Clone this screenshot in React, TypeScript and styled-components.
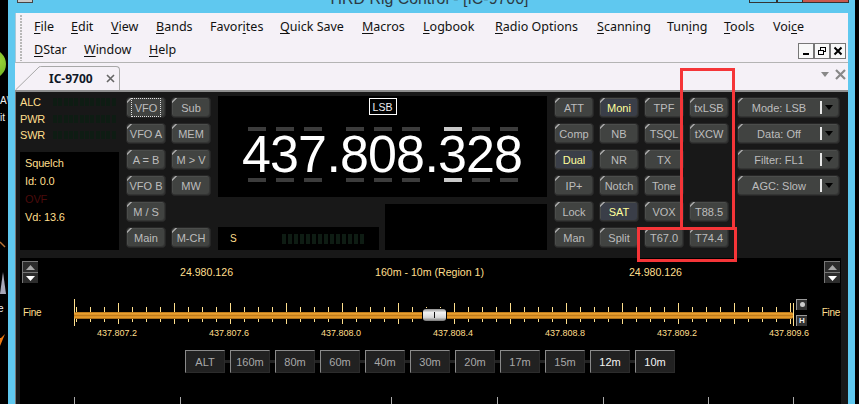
import React from "react";
import styled, { createGlobalStyle, css } from "styled-components";

const Global = createGlobalStyle`
  html, body { margin: 0; padding: 0; background: #000; }
  #root { width: 859px; height: 404px; overflow: hidden; }
`;

const sans = `"Liberation Sans", Arial, sans-serif`;
const amber = "#ffdf8c";

const Screen = styled.div`
  position: relative;
  width: 859px;
  height: 404px;
  display: flex;
  background: #000;
  overflow: hidden;
  font-family: ${sans};
`;

const Desktop = styled.div`
  position: relative;
  width: 8px;
  flex: none;
  overflow: hidden;
  background: #000;
`;
const DesktopGreen = styled.div`
  position: absolute;
  left: -24px;
  top: 49px;
  width: 30px;
  height: 30px;
  border-radius: 50%;
  background: radial-gradient(circle at 70% 40%, #9fd83a, #4f9a10);
`;
const DesktopText = styled.div<{ $top: number }>`
  position: absolute;
  left: ${(p) => (p.$top > 300 ? -7 : 0)}px;
  top: ${(p) => p.$top}px;
  color: #eee;
  font-size: 10px;
  line-height: 12px;
  white-space: nowrap;
`;
const DesktopArt = styled.svg`
  position: absolute;
  left: 0;
  top: 0;
`;

const Win = styled.div`
  width: 847px;
  flex: none;
  display: flex;
  flex-direction: column;
  background: #5fc8ef;
  padding: 0 7px;
  box-sizing: border-box;
`;

const TitleBar = styled.div`
  height: 13px;
  flex: none;
  display: grid;
  grid-template-columns: 1fr auto 1fr;
  overflow: hidden;
  margin: 0 -1px 0 0;
`;
const AppIcon = styled.div`
  width: 16px;
  height: 3px;
  margin-left: 2px;
  background: #c8c8c8;
  border: 1px solid #444;
  border-top: 0;
  box-sizing: border-box;
`;
const TitleText = styled.div`
  margin: -10px 5px 0 0;
  font-size: 15.9px;
  line-height: 18px;
  color: #2c3a44;
  white-space: nowrap;
`;
const TitleControls = styled.div`
  justify-self: end;
  display: flex;
  height: 3px;
`;
const TitleCtl = styled.div<{ $w: number; $close?: boolean }>`
  width: ${(p) => p.$w}px;
  box-sizing: border-box;
  border: 1px solid #333;
  border-top: 0;
  border-left-width: ${(p) => (p.$close ? 0 : 1)}px;
  background: ${(p) => (p.$close ? "#c8584e" : "#5fc8ef")};
`;

const MenuBar = styled.div`
  position: relative;
  height: 50px;
  flex: none;
  box-sizing: border-box;
  padding: 2px 2px 0 19px;
  background: #f5f1f7;
  border-bottom: 1px solid #b4b4b4;
  border-left: 1px solid #a8c8d8;
  display: flex;
  gap: 12px;
`;
const Grip = styled.div`
  width: 2px;
  height: 46px;
  margin: 0 0 0 -15px;
  background: repeating-linear-gradient(to bottom, #b8b8b8 0 2px, transparent 2px 3px);
`;
const MenuRows = styled.div`
  flex: 1;
  display: flex;
  flex-direction: column;
`;
const MenuRow = styled.div`
  height: 23px;
  display: flex;
  align-items: center;
`;
const MenuItem = styled.span<{ $w: number }>`
  width: ${(p) => p.$w}px;
  font-family: "Noto Sans", sans-serif;
  font-size: 12.5px;
  color: #111;
  white-space: nowrap;
  u { text-underline-offset: 2px; }
`;
const MdiControls = styled.div`
  margin-left: auto;
  display: flex;
  margin-top: 3px;
`;
const MdiBtn = styled.div`
  width: 16px;
  height: 16px;
  box-sizing: border-box;
  border: 1px solid #777;
  background: #f8f8f8;
  display: flex;
  align-items: center;
  justify-content: center;
`;

const TabStrip = styled.div`
  height: 29px;
  flex: none;
  box-sizing: border-box;
  background: #f5f1f7;
  border-bottom: 2px solid #8e8e8e;
  padding-top: 3px;
  display: flex;
  align-items: flex-end;
`;
const TabSlope = styled.svg`
  width: 27px;
  height: 24px;
  flex: none;
`;
const Tab = styled.div`
  width: 78px;
  height: 24px;
  box-sizing: border-box;
  border-top: 1px solid #a8a8a8;
  border-right: 1px solid #a8a8a8;
  border-top-right-radius: 4px;
  display: flex;
  align-items: center;
  padding-left: 7px;
  font-family: "Noto Sans", sans-serif;
  font-weight: 700;
  font-size: 12px;
  color: #101828;
`;
const TabClose = styled.svg`
  margin-left: 13px;
  flex: none;
`;
const TabTools = styled.div`
  margin: 0 2px 4px auto;
  display: flex;
  align-items: center;
  gap: 6px;
  height: 24px;
`;

const Body = styled.div`
  flex: 1;
  min-height: 0;
  display: flex;
  flex-direction: column;
  background: #181818;
  border-left: 1px solid #777;
  padding: 0 7px 0 4px;
`;
const TopPanel = styled.div`
  height: 167px;
  flex: none;
  box-sizing: border-box;
  padding-top: 5px;
  display: flex;
  align-items: flex-start;
`;
const MeterColumn = styled.div`
  width: 99px;
  flex: none;
  margin-top: -3px;
  display: flex;
  flex-direction: column;
`;
const MeterRow = styled.div`
  height: 16.5px;
  display: flex;
  align-items: center;
  color: ${amber};
  font-size: 11px;
  letter-spacing: -0.2px;
`;
const MeterName = styled.span`
  width: 33px;
`;
const Segments = styled.div<{ $gap: number }>`
  display: flex;
  gap: ${(p) => p.$gap}px;
`;
const Segment = styled.i<{ $w: number; $h: number }>`
  display: block;
  width: ${(p) => p.$w}px;
  height: ${(p) => p.$h}px;
  background: #0e1c13;
`;
const SquelchBox = styled.div`
  height: 98px;
  margin-top: 8.5px;
  box-sizing: border-box;
  padding: 2px 0 0 5px;
  background: #000;
`;
const SquelchLine = styled.div<{ $off?: boolean }>`
  height: 18px;
  line-height: 18px;
  font-size: 11px;
  letter-spacing: -0.15px;
  color: ${(p) => (p.$off ? "#4a0b0b" : amber)};
`;

const ButtonGrid = styled.div<{ $cols: number }>`
  flex: none;
  margin-left: 7px;
  display: grid;
  grid-template-columns: repeat(${(p) => p.$cols}, 40px);
  grid-auto-rows: 21px;
  gap: 5px;
`;

const buttonLook = css`
  position: relative;
  box-sizing: border-box;
  background: #414341;
  border: 1px solid #262626;
  border-radius: 4px;
  box-shadow: inset -1px -1px 0 #343534, inset 1px 1px 0 #4b4d4b;
  color: #bdbdbd;
  font-size: 11px;
  white-space: nowrap;
  display: flex;
  align-items: center;
  justify-content: center;
  &::before {
    content: "";
    position: absolute;
    left: 0;
    top: 0;
    width: 6px;
    height: 6px;
    background: linear-gradient(135deg, transparent 2px, #a8a8a8 2.5px, #a8a8a8 3.4px, transparent 4px);
  }
`;
const RigButton = styled.div<{ $on?: boolean; $focus?: boolean }>`
  ${buttonLook}
  ${(p) => p.$on && css`background: #3a3e48; color: #ffff9c;`}
  ${(p) =>
    p.$focus &&
    css`
      &::after {
        content: "";
        position: absolute;
        left: 4px;
        right: 4px;
        top: 0;
        bottom: 0;
        border: 1px dotted #e0e0e0;
      }
    `}
`;
const EmptyCell = styled.div``;

const Center = styled.div`
  width: 329px;
  flex: none;
  margin-left: 7px;
  margin-top: -1px;
  display: flex;
  flex-direction: column;
`;
const Display = styled.div`
  height: 101px;
  box-sizing: border-box;
  background: #000;
  padding-top: 2px;
  display: flex;
  flex-direction: column;
  align-items: center;
`;
const ModeBadge = styled.div`
  width: 28px;
  height: 17px;
  box-sizing: border-box;
  border: 1px solid #fff;
  color: #eee;
  font-size: 10.5px;
  display: flex;
  align-items: center;
  justify-content: center;
`;
const Frequency = styled.div`
  margin-top: 12px;
  display: flex;
`;
const DigitCell = styled.div`
  width: 28px;
  display: flex;
  flex-direction: column;
  align-items: center;
`;
const DigitMark = styled.i<{ $on?: boolean }>`
  display: block;
  width: 18px;
  height: 4px;
  background: ${(p) => (p.$on ? "#c8c8c8" : "#3c3c3c")};
`;
const DigitGlyph = styled.span`
  height: 47px;
  line-height: 46px;
  font-size: 52px;
  color: #fff;
`;
const DotGlyph = styled.span`
  width: 14px;
  height: 55px;
  line-height: 46px;
  margin-top: 4px;
  font-size: 52px;
  color: #fff;
  text-align: center;
`;
const LowerRow = styled.div`
  margin-top: 7px;
  display: flex;
  gap: 6px;
  align-items: flex-end;
`;
const SMeter = styled.div`
  width: 161px;
  height: 23px;
  background: #000;
  box-sizing: border-box;
  padding-left: 12px;
  display: flex;
  align-items: center;
  color: ${amber};
  font-size: 10px;
`;
const SName = styled.span`
  width: 52px;
`;
const InfoBox = styled.div`
  width: 162px;
  height: 46px;
  background: #000;
`;

const ModeColumn = styled.div`
  width: 103px;
  flex: none;
  margin-left: 8px;
  display: flex;
  flex-direction: column;
  gap: 5px;
`;
const ModeButton = styled.div`
  ${buttonLook}
  height: 21px;
  justify-content: flex-start;
`;
const ModeLabel = styled.span`
  width: 82px;
  text-align: center;
`;
const ModeBar = styled.i`
  display: block;
  width: 2px;
  height: 13px;
  background: #e8e8e8;
`;
const ModeArrow = styled.i`
  display: block;
  margin-left: 3px;
  width: 0;
  height: 0;
  border-left: 4.5px solid transparent;
  border-right: 4.5px solid transparent;
  border-top: 5px solid #000;
`;

const Scale = styled.div`
  flex: 1;
  min-height: 0;
  background: #000;
  display: flex;
  flex-direction: column;
  margin-top: -1px;
`;
const ScaleHead = styled.div`
  margin-top: 3px;
  padding: 0 1px 0 2px;
  display: flex;
  justify-content: space-between;
  align-items: center;
  color: ${amber};
  font-size: 10.6px;
`;
const RegionLabel = styled.span`
  margin-right: 3px;
`;
const Spinner = styled.div`
  width: 16px;
  display: flex;
  flex-direction: column;
`;
const SpinBtn = styled.div`
  height: 10px;
  background: #2c2c2c;
  border-left: 1px solid #777;
  border-top: 1px solid #777;
  box-sizing: content-box;
  display: flex;
  align-items: center;
  justify-content: center;
`;
const SliderRow = styled.div`
  margin-top: 14px;
  height: 30px;
  display: flex;
  align-items: center;
  padding: 0 1px 0 3px;
`;
const FineLabel = styled.span`
  color: ${amber};
  font-size: 10px;
  letter-spacing: -0.3px;
  width: 47px;
  flex: none;
`;
const FineEnd = styled(FineLabel)`
  width: auto;
  margin-left: auto;
`;
const Ruler = styled.svg`
  width: 725px;
  height: 30px;
  flex: none;
`;
const SideButtons = styled.div`
  margin-left: 1px;
  display: flex;
  flex-direction: column;
  gap: 5px;
`;
const SideBtn = styled.div`
  width: 11px;
  height: 11px;
  box-sizing: border-box;
  background: #333;
  border-left: 1px solid #999;
  border-top: 1px solid #999;
  color: #eee;
  font-size: 8px;
  font-weight: 700;
  display: flex;
  align-items: center;
  justify-content: center;
`;
const SideDot = styled.i`
  display: block;
  width: 5px;
  height: 5px;
  border-radius: 50%;
  background: #ccc;
`;
const TickLabels = styled.div`
  margin-top: 1px;
  padding-left: 41px;
  display: flex;
`;
const TickLabel = styled.span`
  width: 112px;
  flex: none;
  text-align: center;
  color: ${amber};
  font-size: 9px;
  line-height: 10px;
`;
const BandRow = styled.div`
  margin-top: 12px;
  padding-left: 165px;
  display: flex;
  align-items: center;
`;
const BandBtn = styled.div<{ $bright?: boolean }>`
  width: 40px;
  height: 23px;
  box-sizing: border-box;
  background: #212121;
  border-left: 1px solid #8a8a8a;
  border-top: 1px solid #8a8a8a;
  border-right: 1px solid #2c2c2c;
  border-bottom: 1px solid #2c2c2c;
  color: ${(p) => (p.$bright ? "#f4f4f4" : "#a8a8a8")};
  font-size: 11px;
  display: flex;
  align-items: center;
  justify-content: center;
`;
const BandLink = styled.i`
  display: block;
  width: 5px;
  height: 3px;
  background: #222;
`;
const BottomRuler = styled.svg`
  margin-top: auto;
  width: 820px;
  height: 7px;
  flex: none;
`;

const TallMark = styled.div`
  position: absolute;
  left: 680px;
  top: 68px;
  width: 55px;
  height: 162px;
  box-sizing: border-box;
  border: 3px solid #f53538;
  border-bottom: 0;
`;
const WideMark = styled.div`
  position: absolute;
  left: 637px;
  top: 227px;
  width: 100px;
  height: 35px;
  box-sizing: border-box;
  border: 3px solid #f53538;
`;

type Cell = { t?: string; on?: boolean; focus?: boolean };
const leftButtons: Cell[] = [
  { t: "VFO", focus: true }, { t: "Sub" },
  { t: "VFO A" }, { t: "MEM" },
  { t: "A = B" }, { t: "M > V" },
  { t: "VFO B" }, { t: "MW" },
  { t: "M / S" }, {},
  { t: "Main" }, { t: "M-CH" },
];
const rightButtons: Cell[] = [
  { t: "ATT" }, { t: "Moni", on: true }, { t: "TPF" }, { t: "txLSB" },
  { t: "Comp" }, { t: "NB" }, { t: "TSQL" }, { t: "tXCW" },
  { t: "Dual", on: true }, { t: "NR" }, { t: "TX" }, {},
  { t: "IP+" }, { t: "Notch" }, { t: "Tone" }, {},
  { t: "Lock" }, { t: "SAT", on: true }, { t: "VOX" }, { t: "T88.5" },
  { t: "Man" }, { t: "Split" }, { t: "T67.0" }, { t: "T74.4" },
];
const bands = ["ALT", "160m", "80m", "60m", "40m", "30m", "20m", "17m", "15m", "12m", "10m"];
const freq = "437.808.328";

const Buttons = ({ items }: { items: Cell[] }) => (
  <>
    {items.map((b, i) =>
      b.t ? (
        <RigButton key={i} $on={b.on} $focus={b.focus}>{b.t}</RigButton>
      ) : (
        <EmptyCell key={i} />
      )
    )}
  </>
);

const Menu = ({ w, text, u }: { w: number; text: string; u: number }) => (
  <MenuItem $w={w}>
    {text.slice(0, u)}
    <u>{text[u]}</u>
    {text.slice(u + 1)}
  </MenuItem>
);

const Meter = ({ name }: { name: string }) => (
  <MeterRow>
    <MeterName>{name}</MeterName>
    <Segments $gap={1.33}>
      {Array.from({ length: 12 }, (_, i) => <Segment key={i} $w={4} $h={8} />)}
    </Segments>
  </MeterRow>
);

const minor = Array.from({ length: 52 }, (_, i) => 6 + 14 * i);
const major = Array.from({ length: 13 }, (_, i) => 48 + 56 * i);

const Spin = () => (
  <Spinner>
    <SpinBtn>
      <svg width="9" height="5"><path d="M4.5 0L9 5H0z" fill="#a8a8a8" /></svg>
    </SpinBtn>
    <SpinBtn>
      <svg width="9" height="5"><path d="M0 0H9L4.5 5z" fill="#fff" /></svg>
    </SpinBtn>
  </Spinner>
);

export default function App() {
  return (
    <Screen>
      <Global />
      <Desktop>
        <DesktopGreen />
        <DesktopText $top={95}>A\</DesktopText>
        <DesktopText $top={112}>it</DesktopText>
        <DesktopText $top={303}>ce</DesktopText>
        <DesktopArt width="8" height="404">
          <path d="M0 242L5 247" stroke="#b87333" strokeWidth="1.5" />
          <path d="M0 294L3 272L6 294z" fill="#a8a8b8" />
          <path d="M0 346L5 334L1 338L0 338z" fill="#ef7a10" />
        </DesktopArt>
      </Desktop>
      <Win>
        <TitleBar>
          <AppIcon />
          <TitleText>HRD Rig Control - [IC-9700]</TitleText>
          <TitleControls>
            <TitleCtl $w={28} />
            <TitleCtl $w={26} />
            <TitleCtl $w={46} $close />
          </TitleControls>
        </TitleBar>
        <MenuBar>
          <Grip />
          <MenuRows>
            <MenuRow>
              <Menu w={37} text="File" u={0} />
              <Menu w={40} text="Edit" u={0} />
              <Menu w={45} text="View" u={0} />
              <Menu w={54} text="Bands" u={0} />
              <Menu w={70} text="Favorites" u={5} />
              <Menu w={82} text="Quick Save" u={0} />
              <Menu w={61} text="Macros" u={0} />
              <Menu w={72} text="Logbook" u={0} />
              <Menu w={102} text="Radio Options" u={0} />
              <Menu w={70} text="Scanning" u={0} />
              <Menu w={57} text="Tuning" u={3} />
              <Menu w={49} text="Tools" u={0} />
              <Menu w={40} text="Voice" u={3} />
            </MenuRow>
            <MenuRow>
              <Menu w={50} text="DStar" u={0} />
              <Menu w={65} text="Window" u={0} />
              <Menu w={40} text="Help" u={0} />
              <MdiControls>
                <MdiBtn>
                  <svg width="10" height="10"><rect x="2" y="7" width="6" height="2" fill="#000" /></svg>
                </MdiBtn>
                <MdiBtn>
                  <svg width="10" height="10" fill="none" stroke="#000">
                    <rect x="3.5" y="1.5" width="5" height="4" />
                    <rect x="1.5" y="4.5" width="5" height="4" fill="#f8f8f8" />
                  </svg>
                </MdiBtn>
                <MdiBtn>
                  <svg width="10" height="10" stroke="#000" strokeWidth="2">
                    <path d="M1.5 1.5L8.5 8.5M8.5 1.5L1.5 8.5" />
                  </svg>
                </MdiBtn>
              </MdiControls>
            </MenuRow>
          </MenuRows>
        </MenuBar>
        <TabStrip>
          <TabSlope viewBox="0 0 27 24">
            <path d="M0.5 24L24 1Q25 0 27 0.5" fill="none" stroke="#a8a8a8" />
          </TabSlope>
          <Tab>
            IC-9700
            <TabClose width="9" height="9" stroke="#666" strokeWidth="1.6">
              <path d="M1 1L8 8M8 1L1 8" />
            </TabClose>
          </Tab>
          <TabTools>
            <svg width="8" height="5"><path d="M0 0H8L4 5z" fill="#888" /></svg>
            <svg width="11" height="11" stroke="#888" strokeWidth="2.2">
              <path d="M1 1L10 10M10 1L1 10" />
            </svg>
          </TabTools>
        </TabStrip>
        <Body>
          <TopPanel>
            <MeterColumn>
              <Meter name="ALC" />
              <Meter name="PWR" />
              <Meter name="SWR" />
              <SquelchBox>
                <SquelchLine>Squelch</SquelchLine>
                <SquelchLine>Id: 0.0</SquelchLine>
                <SquelchLine $off>OVF</SquelchLine>
                <SquelchLine>Vd: 13.6</SquelchLine>
              </SquelchBox>
            </MeterColumn>
            <ButtonGrid $cols={2}>
              <Buttons items={leftButtons} />
            </ButtonGrid>
            <Center>
              <Display>
                <ModeBadge>LSB</ModeBadge>
                <Frequency>
                  {freq.split("").map((c, i) =>
                    c === "." ? (
                      <DotGlyph key={i}>.</DotGlyph>
                    ) : (
                      <DigitCell key={i}>
                        <DigitMark $on={i === 8} />
                        <DigitGlyph>{c}</DigitGlyph>
                        <DigitMark $on={i === 8} />
                      </DigitCell>
                    )
                  )}
                </Frequency>
              </Display>
              <LowerRow>
                <SMeter>
                  <SName>S</SName>
                  <Segments $gap={2}>
                    {Array.from({ length: 14 }, (_, i) => <Segment key={i} $w={4} $h={10} />)}
                  </Segments>
                </SMeter>
                <InfoBox />
              </LowerRow>
            </Center>
            <ButtonGrid $cols={4}>
              <Buttons items={rightButtons} />
            </ButtonGrid>
            <ModeColumn>
              {["Mode: LSB", "Data: Off", "Filter: FL1", "AGC: Slow"].map((m) => (
                <ModeButton key={m}>
                  <ModeLabel>{m}</ModeLabel>
                  <ModeBar />
                  <ModeArrow />
                </ModeButton>
              ))}
            </ModeColumn>
          </TopPanel>
          <Scale>
            <ScaleHead>
              <Spin />
              <span>24.980.126</span>
              <RegionLabel>160m - 10m (Region 1)</RegionLabel>
              <span>24.980.126</span>
              <Spin />
            </ScaleHead>
            <SliderRow>
              <FineLabel>Fine</FineLabel>
              <Ruler viewBox="0 0 725 30">
                <defs>
                  <linearGradient id="track" x1="0" x2="0" y1="0" y2="1">
                    <stop offset="0" stopColor="#a86c18" />
                    <stop offset="0.25" stopColor="#f5a832" />
                    <stop offset="0.5" stopColor="#c07c1c" />
                    <stop offset="0.75" stopColor="#f2a42e" />
                    <stop offset="1" stopColor="#8c5812" />
                  </linearGradient>
                  <linearGradient id="thumb" x1="0" x2="0" y1="0" y2="1">
                    <stop offset="0" stopColor="#8f8f8f" />
                    <stop offset="0.3" stopColor="#f2f2f2" />
                    <stop offset="0.7" stopColor="#d8d8d8" />
                    <stop offset="1" stopColor="#777" />
                  </linearGradient>
                </defs>
                {minor.map((x) => (
                  <line key={x} x1={x + 0.5} x2={x + 0.5} y1="10" y2="25" stroke={amber} />
                ))}
                {major.map((x) => (
                  <line key={x} x1={x + 0.5} x2={x + 0.5} y1="6" y2="27" stroke={amber} />
                ))}
                <line x1="4.5" x2="4.5" y1="2" y2="29" stroke={amber} />
                <line x1="723.5" x2="723.5" y1="6" y2="29" stroke={amber} />
                <rect x="4" y="15" width="719" height="7" rx="2" fill="url(#track)" />
                <rect x="352" y="11" width="25" height="14" rx="3" fill="#000" />
                <rect x="353" y="12" width="23" height="12" rx="3" fill="url(#thumb)" />
                <line x1="364.5" x2="364.5" y1="15" y2="21" stroke="#111" />
              </Ruler>
              <SideButtons>
                <SideBtn><SideDot /></SideBtn>
                <SideBtn>H</SideBtn>
              </SideButtons>
              <FineEnd>Fine</FineEnd>
            </SliderRow>
            <TickLabels>
              {["437.807.2", "437.807.6", "437.808.0", "437.808.4", "437.808.8", "437.809.2", "437.809.6"].map((t) => (
                <TickLabel key={t}>{t}</TickLabel>
              ))}
            </TickLabels>
            <BandRow>
              {bands.map((b, i) => (
                <React.Fragment key={b}>
                  {i > 0 && <BandLink />}
                  <BandBtn $bright={i >= 9}>{b}</BandBtn>
                </React.Fragment>
              ))}
            </BandRow>
            <BottomRuler viewBox="0 0 820 7">
              {[54, 160, 371, 477, 583, 688, 773].map((x) => (
                <line key={x} x1={x + 0.5} x2={x + 0.5} y1="0" y2="7" stroke="#aaa" />
              ))}
            </BottomRuler>
          </Scale>
        </Body>
      </Win>
      <TallMark />
      <WideMark />
    </Screen>
  );
}
